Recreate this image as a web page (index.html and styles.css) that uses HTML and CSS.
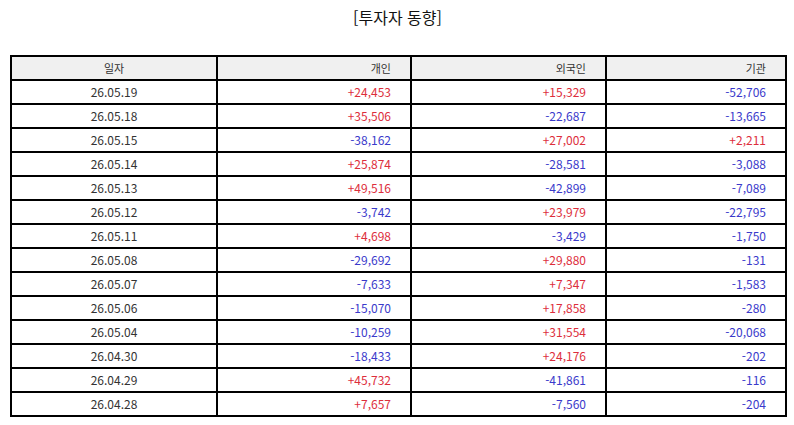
FILE: index.html
```html
<!DOCTYPE html>
<html lang="ko">
<head>
<meta charset="utf-8">
<title>투자자 동향</title>
<link rel="stylesheet" href="styles.css">
</head>
<body>
<div class="page">
  <h1 class="title">[투자자 동향]</h1>
  <table class="grid">
    <colgroup>
      <col class="c-date">
      <col class="c-ind">
      <col class="c-for">
      <col class="c-inst">
    </colgroup>
    <thead>
      <tr><th class="center">일자</th><th>개인</th><th>외국인</th><th>기관</th></tr>
    </thead>
    <tbody>
      <tr><td class="center">26.05.19</td><td class="up">+24,453</td><td class="up">+15,329</td><td class="down">-52,706</td></tr>
      <tr><td class="center">26.05.18</td><td class="up">+35,506</td><td class="down">-22,687</td><td class="down">-13,665</td></tr>
      <tr><td class="center">26.05.15</td><td class="down">-38,162</td><td class="up">+27,002</td><td class="up">+2,211</td></tr>
      <tr><td class="center">26.05.14</td><td class="up">+25,874</td><td class="down">-28,581</td><td class="down">-3,088</td></tr>
      <tr><td class="center">26.05.13</td><td class="up">+49,516</td><td class="down">-42,899</td><td class="down">-7,089</td></tr>
      <tr><td class="center">26.05.12</td><td class="down">-3,742</td><td class="up">+23,979</td><td class="down">-22,795</td></tr>
      <tr><td class="center">26.05.11</td><td class="up">+4,698</td><td class="down">-3,429</td><td class="down">-1,750</td></tr>
      <tr><td class="center">26.05.08</td><td class="down">-29,692</td><td class="up">+29,880</td><td class="down">-131</td></tr>
      <tr><td class="center">26.05.07</td><td class="down">-7,633</td><td class="up">+7,347</td><td class="down">-1,583</td></tr>
      <tr><td class="center">26.05.06</td><td class="down">-15,070</td><td class="up">+17,858</td><td class="down">-280</td></tr>
      <tr><td class="center">26.05.04</td><td class="down">-10,259</td><td class="up">+31,554</td><td class="down">-20,068</td></tr>
      <tr><td class="center">26.04.30</td><td class="down">-18,433</td><td class="up">+24,176</td><td class="down">-202</td></tr>
      <tr><td class="center">26.04.29</td><td class="up">+45,732</td><td class="down">-41,861</td><td class="down">-116</td></tr>
      <tr><td class="center">26.04.28</td><td class="up">+7,657</td><td class="down">-7,560</td><td class="down">-204</td></tr>
    </tbody>
  </table>
</div>
</body>
</html>
```

FILE: styles.css
```css
html, body {
  margin: 0;
  padding: 0;
  background: #ffffff;
}

.page {
  width: 794px;
  padding: 0 9px 0 10px;
  box-sizing: border-box;
  font-family: "Noto Sans CJK KR", "Noto Sans", sans-serif;
  color: #333333;
}

.title {
  margin: 0;
  height: 55px;
  padding-top: 5px;
  box-sizing: border-box;
  font-size: 16px;
  font-weight: normal;
  line-height: 24px;
  text-align: center;
  color: #111111;
}

.grid {
  border-collapse: collapse;
  table-layout: fixed;
  width: 775px;
  font-size: 12px;
}

.c-date { width: 206px; }
.c-ind { width: 194px; }
.c-for { width: 195px; }
.c-inst { width: 180px; }

.grid th,
.grid td {
  border: 2px solid #000000;
  height: 22px;
  padding: 0 19px 0 0;
  text-align: right;
  font-weight: normal;
  line-height: 22px;
  white-space: nowrap;
}

.grid th {
  background: #f0f0f0;
  font-size: 11px;
  color: #333333;
}

.grid .center {
  text-align: center;
  padding: 0;
}

.up { color: #dd2e3c; }
.down { color: #3a3acb; }
```
